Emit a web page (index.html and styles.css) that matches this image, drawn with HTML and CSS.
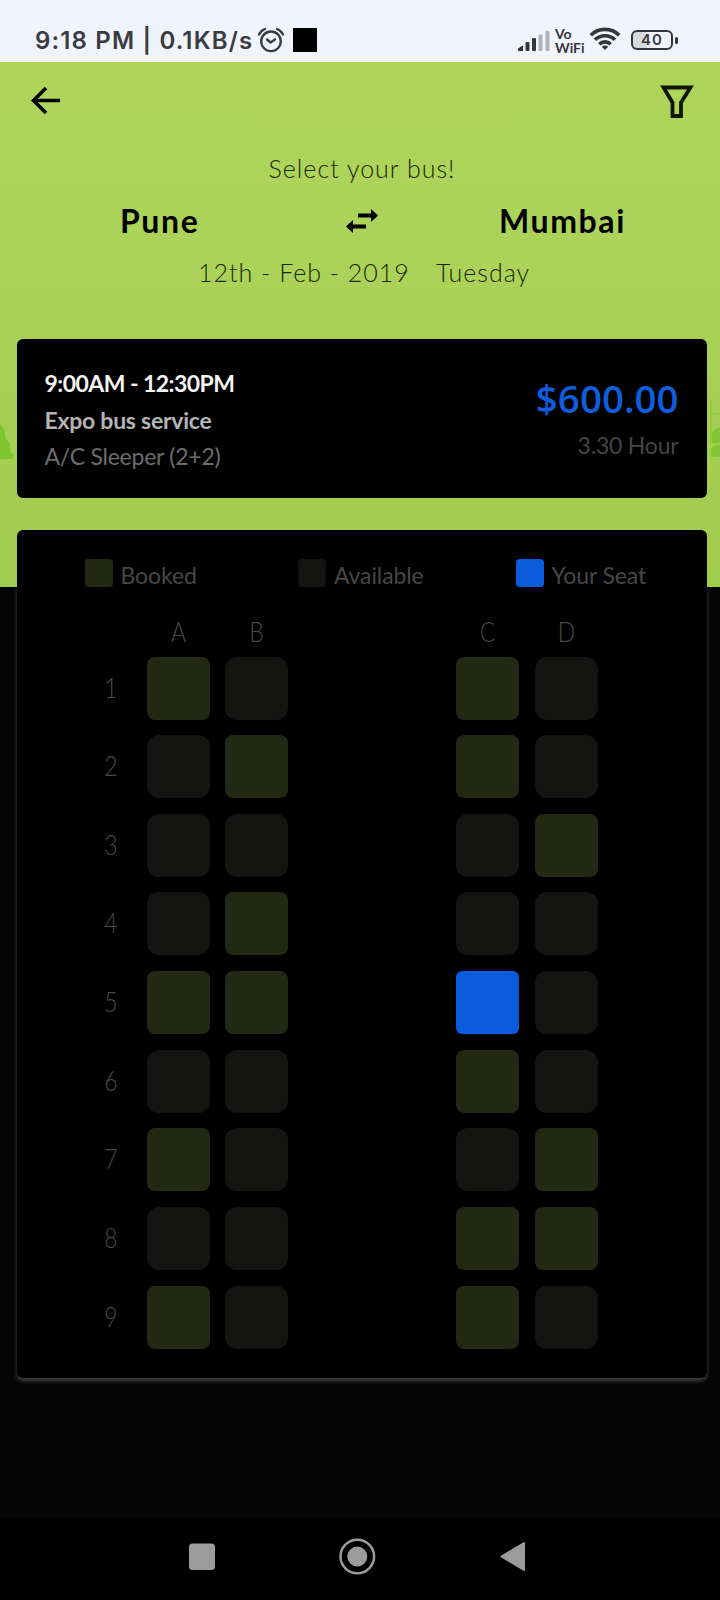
FILE: index.html
```html
<!DOCTYPE html>
<html lang="en">
<head>
<meta charset="utf-8">
<title>Select your bus</title>
<link rel="stylesheet" href="styles.css">
</head>
<body>
<div class="screen">
  <div class="status">
    <span class="clock">9:18 PM | 0.1KB/s</span>
    <svg class="alarm" width="28" height="26" viewBox="0 0 28 26" fill="none" stroke="#3b3c42" stroke-width="2.400" stroke-linecap="round" stroke-linejoin="round"><circle cx="14" cy="14.300" r="9.800"/><path d="M10 12.500l3.500 3 4.500-3M2 7.500Q4 3.500 8 2M26 7.500Q24 3.500 20 2"/></svg>
    <span class="notice"></span>
    <svg class="signal" width="34" height="22" viewBox="0 0 34 22"><g fill="#35363b"><path d="M1 21v-2q2-3 5-3.500v5.500z"/><rect x="8.500" y="12" width="4" height="9" rx="1"/><rect x="15" y="8" width="4" height="13" rx="1"/></g><g fill="#b0b1b7"><rect x="21.500" y="4.500" width="4" height="16.500" rx="1"/><rect x="28.500" y="1" width="4" height="20" rx="1"/></g></svg>
    <span class="vowifi"><span>Vo</span><span>WiFi</span></span>
    <svg class="wifi" width="32" height="24" viewBox="0 0 32 24" fill="none" stroke="#35363b" stroke-width="3.600"><path d="M1.800 8.300a20 20 0 0 1 28.400 0M6 12.800a14.200 14.200 0 0 1 20 0M10.300 17.200a8.200 8.200 0 0 1 11.400 0"/><path d="M16 23l-3.200-3.300q3.200-2.400 6.400 0z" fill="#35363b" stroke="none"/></svg>
    <span class="battery"><span>40</span></span><span class="tip"></span>
  </div>
  <div class="hero">
    <svg class="scene" width="720" height="120" viewBox="0 0 720 120"><path d="M0 24l4 5 2 10 4 5v7l4 4-2 4H0z" fill="#7fc52f"/><g fill="#82c637"><path d="M712 33q3-5 8-5v15h-8z"/><path d="M711 48q4-4 9-3v12h-9z"/></g><path d="M707 0h4v44M711 14h9" fill="none" stroke="#92c944" stroke-width="1.500"/></svg>
    <div class="toolbar">
      <svg width="30" height="30" viewBox="0 0 30 30" fill="none" stroke="#000" stroke-width="3.600"><path d="M29 15.500H3M15 3L2.500 15.500 15 28"/></svg>
      <svg width="34" height="34" viewBox="0 0 34 34" fill="none" stroke="#101500" stroke-width="3.800"><path d="M3.500 2.500h27L21 17.500V31h-8.500V17.500z"/></svg>
    </div>
    <div class="title">Select your bus!</div>
    <div class="route">
      <span class="from">Pune</span>
      <svg width="32" height="24" viewBox="0 0 32 24"><path d="M12 4.500h13V0l7 6.500-7 6.500V8.500H12zM20 15.500H7V11l-7 6.500L7 24v-4.500h13z"/></svg>
      <span class="to">Mumbai</span>
    </div>
    <div class="date"><span>12th - Feb - 2019</span><span class="day">Tuesday</span></div>
  </div>
  <div class="card trip">
    <div class="info"><div class="time">9:00AM - 12:30PM</div><div class="service">Expo bus service</div><div class="kind">A/C Sleeper (2+2)</div></div>
    <div class="cost"><div class="price">$600.00</div><div class="hours">3.30 Hour</div></div>
  </div>
  <div class="card seats">
    <div class="legend">
      <div class="key"><i class="seat booked"></i><span>Booked</span></div>
      <div class="key k2"><i class="seat"></i><span>Available</span></div>
      <div class="key k3"><i class="seat yours"></i><span>Your Seat</span></div>
    </div>
    <div class="cols"><b></b><b>A</b><b>B</b><b></b><b>C</b><b>D</b></div>
    <div class="grid">
      <b>1</b><i class="seat booked"></i><i class="seat"></i><b></b><i class="seat booked"></i><i class="seat"></i>
      <b>2</b><i class="seat"></i><i class="seat booked"></i><b></b><i class="seat booked"></i><i class="seat"></i>
      <b>3</b><i class="seat"></i><i class="seat"></i><b></b><i class="seat"></i><i class="seat booked"></i>
      <b>4</b><i class="seat"></i><i class="seat booked"></i><b></b><i class="seat"></i><i class="seat"></i>
      <b>5</b><i class="seat booked"></i><i class="seat booked"></i><b></b><i class="seat yours"></i><i class="seat"></i>
      <b>6</b><i class="seat"></i><i class="seat"></i><b></b><i class="seat booked"></i><i class="seat"></i>
      <b>7</b><i class="seat booked"></i><i class="seat"></i><b></b><i class="seat"></i><i class="seat booked"></i>
      <b>8</b><i class="seat"></i><i class="seat"></i><b></b><i class="seat booked"></i><i class="seat booked"></i>
      <b>9</b><i class="seat booked"></i><i class="seat"></i><b></b><i class="seat booked"></i><i class="seat"></i>
    </div>
  </div>
  <div class="nav">
    <svg width="720" height="82" viewBox="0 0 720 82" fill="#9b9b9b"><rect x="189" y="25.500" width="26" height="26.500" rx="3.500"/><circle cx="357.300" cy="38.500" r="16.800" fill="none" stroke="#9b9b9b" stroke-width="2.500"/><circle cx="357.300" cy="38.500" r="10"/><path d="M501.500 38.500L524 25v27z" stroke="#9b9b9b" stroke-width="2" stroke-linejoin="round"/></svg>
  </div>
</div>
</body>
</html>
```
FILE: styles.css
```css
* { box-sizing: border-box; }
body { margin: 0; background: #050505; }
.screen { width: 720px; height: 1600px; display: flex; flex-direction: column; font-family: Lato, "Open Sans", sans-serif; overflow: hidden; }
svg { display: block; flex: none; }
.status { height: 62px; flex: none; background: #f1f4fc; display: flex; align-items: flex-start; padding: 27px 0 0 35px; color: #3b3c42; }
.clock { font: 600 24px/27px Inter, sans-serif; width: 222px; letter-spacing: 1.150px; white-space: nowrap; }
.notice { width: 24px; height: 24px; background: #000; margin: 1px 0 0 8px; }
.signal { margin: 3px 0 0 200px; }
.vowifi { font: 700 14px/14px Lato, sans-serif; display: flex; flex-direction: column; margin-left: 4px; width: 30px; color: #35363b; white-space: nowrap; }
.wifi { margin-left: 4px; }
.battery { width: 42px; height: 20px; border: 2px solid #35363b; border-radius: 6px; margin: 3px 0 0 10px; font: 600 15px/16px Inter, sans-serif; text-align: center; letter-spacing: 1px; background: linear-gradient(90deg, #d7d9e1 38%, transparent 38%); }
.tip { width: 3px; height: 7px; background: #35363b; border-radius: 2px; margin: 10px 0 0 2px; }
.hero { height: 525px; flex: none; background: linear-gradient(#aed55a, #abd359 35%, #9fcb4e); position: relative; color: #0d1200; }
.scene { position: absolute; left: 0; top: 338px; }
.toolbar { display: flex; justify-content: space-between; padding: 23px 26px 0 31px; height: 88px; }
.title { font: 300 25px/36px Lato, sans-serif; text-align: center; letter-spacing: 1px; color: #1c2600; padding-left: 4px; }
.route { display: flex; margin-top: 14px; height: 42px; align-items: center; color: #000; font: 700 32px/42px Lato, sans-serif; letter-spacing: 1.600px; }
.from { width: 346px; padding-left: 120px; }
.to { padding-left: 121px; }
.date { font: 300 25px/36px Lato, sans-serif; margin-top: 12px; letter-spacing: 1px; color: #1c2600; display: flex; padding-left: 198px; }
.date span { width: 238px; white-space: nowrap; }
.card { width: 690px; margin-left: 16.500px; background: #000; border-radius: 6px; flex: none; position: relative; color: #505050; }
.trip { height: 158.500px; margin-top: -248px; display: flex; justify-content: space-between; padding: 26px 28px 0; }
.info { font-size: 23px; line-height: 36.500px; white-space: nowrap; }
.time { color: #f4f4f4; font-weight: 700; letter-spacing: -.550px; }
.service { color: #b4b4b4; font-weight: 700; letter-spacing: -.250px; }
.kind { color: #6d6d6d; letter-spacing: -.250px; }
.cost { text-align: right; }
.price { color: #0f5cdc; font: 600 38.500px/66px "Open Sans", sans-serif; }
.hours { font-size: 23px; line-height: 28px; letter-spacing: -.200px; color: #454545; }
.seats { height: 848px; margin-top: 32.500px; }
.seats::before { content: ""; position: absolute; inset: 57px 0 0; border-radius: 0 0 6px 6px; box-shadow: 0 3px 4px #414141; clip-path: inset(0 -8px -12px -8px); }
.legend { display: flex; padding: 29px 0 0 68px; height: 85px; font-size: 23px; line-height: 32px; letter-spacing: -.100px; color: #464646; position: relative; }
.key { display: flex; flex: none; width: 213.500px; gap: 8px; white-space: nowrap; }
.k3 { margin-left: 4px; width: 140px; }
.legend .seat { width: 28px; height: 28px; border-radius: 4px; flex: none; }
.seat { display: block; height: 63px; border-radius: 12px; background: #141512; }
.booked { background: #222812; border-radius: 8px; }
.yours { background: #0b5bdd; border-radius: 6px; }
.cols, .grid { display: grid; grid-template-columns: 36px 63px 63px 137px 63px 63px; column-gap: 15.500px; padding-left: 78.500px; font-family: Lato, sans-serif; color: #4a4a4a; text-align: center; }
.cols { height: 41.500px; line-height: 32px; font-size: 28px; }
.cols b, .grid b { font-weight: 300; transform: scaleX(.82); }
.grid { row-gap: 15.650px; font-size: 28px; line-height: 61px; }
.grid b { padding-right: 5px; }
.nav { margin-top: auto; height: 82px; background: #000; flex: none; }
```
